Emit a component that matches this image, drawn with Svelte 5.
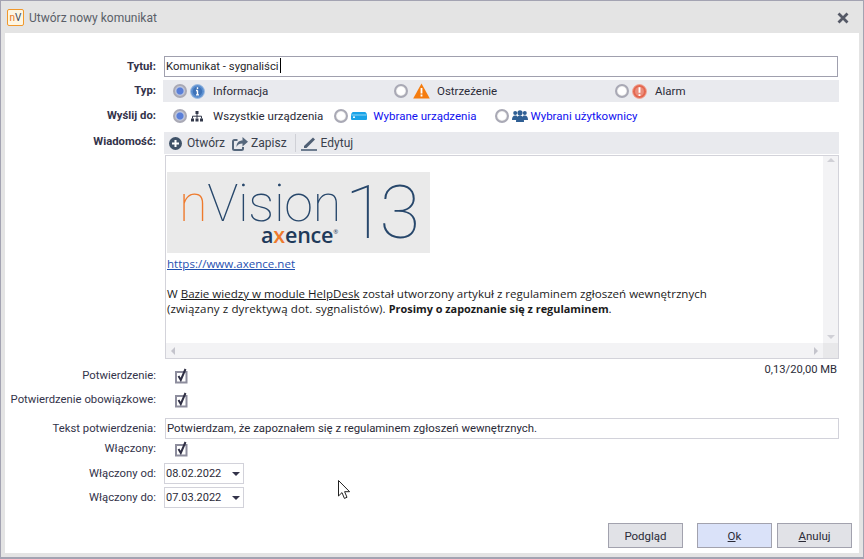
<script lang="ts">
  const types = [
    { label: 'Informacja', checked: true, icon: 'info', width: 221 },
    { label: 'Ostrzeżenie', checked: false, icon: 'warn', width: 221 },
    { label: 'Alarm', checked: false, icon: 'alarm', width: 0 }
  ];
</script>

{#snippet radio(checked: boolean)}
  <span class="radio" class:checked></span>
{/snippet}

{#snippet check()}
  <svg class="check" width="13" height="16" viewBox="0 0 13 16">
    <rect x="1" y="4" width="10.500" height="10.500" fill="#fff" stroke="#8d8d9d" stroke-width="2" />
    <path d="M3.500 8l2.300 4L10.500 1" fill="none" stroke="#2f2f44" stroke-width="2" />
  </svg>
{/snippet}

<div class="window">
  <header class="titlebar">
    <span class="appicon"><i>n</i><b>V</b></span>
    <span class="title">Utwórz nowy komunikat</span>
    <svg class="close" width="12" height="12" viewBox="0 0 12 12">
      <path d="M1.500 1.500l9 9M10.500 1.500l-9 9" stroke="#555966" stroke-width="2.800" />
    </svg>
  </header>

  <main class="body">
    <div class="row r-title">
      <label class="lbl strong" for="t">Tytuł:</label>
      <div class="input title-input" id="t">Komunikat - sygnaliści<span class="caret"></span></div>
    </div>

    <div class="row r-type">
      <span class="lbl strong">Typ:</span>
      <div class="typebar">
        {#each types as t}
          <div class="typeitem" style="width: {t.width ? t.width + 'px' : 'auto'}">
            {@render radio(t.checked)}
            {#if t.icon === 'info'}
              <svg class="ic" width="15" height="15" viewBox="0 0 16 16">
                <circle cx="8" cy="8" r="7.400" fill="#5b8fd0" stroke="#9dbbe0" />
                <circle cx="8" cy="8" r="5" fill="#3f73b8" />
                <path d="M8 3.500v1.800M8 7v4.600M6.400 7h1.800M6.400 11.600h3.200" stroke="#fff" stroke-width="1.500" />
              </svg>
            {:else if t.icon === 'warn'}
              <svg class="ic warn" width="17" height="16" viewBox="0 0 17 16">
                <path d="M8.500 0.500L16.800 15.500H0.200z" fill="#f57c0f" />
                <path d="M8.500 5v5.400M8.500 11.600v2" stroke="#fff" stroke-width="1.800" />
              </svg>
            {:else}
              <svg class="ic" width="15" height="15" viewBox="0 0 16 16">
                <circle cx="8" cy="8" r="7.400" fill="#e4674f" stroke="#f0a898" />
                <circle cx="8" cy="8" r="4.800" fill="#fff" opacity="0.250" />
                <path d="M8 3.400v6M8 10.800v2" stroke="#fff" stroke-width="2" />
              </svg>
            {/if}
            <span class="typelabel">{t.label}</span>
          </div>
        {/each}
      </div>
    </div>

    <div class="row r-send">
      <span class="lbl strong">Wyślij do:</span>
      <div class="sendbar">
        {@render radio(true)}
        <svg class="ic i-tree" width="12" height="11" viewBox="0 0 12 11">
          <path d="M4.500 0h3v3h-3zM0 7.500h3v3H0zM4.500 7.500h3v3h-3zM9 7.500h3v3H9z" fill="#33394a" />
          <path d="M6 3v4.500M1.500 7.500V5.200h9v2.300" fill="none" stroke="#33394a" />
        </svg>
        <span class="s-all">Wszystkie urządzenia</span>
        {@render radio(false)}
        <svg class="ic i-dev" width="16" height="8" viewBox="0 0 16 8">
          <path d="M2 0h12q1 0 1.500 1.500L16 3v4q0 1-1 1H1q-1 0-1-1V3l.5-1.500Q1 0 2 0z" fill="#19a3e8" />
          <path d="M0.500 3h15" stroke="#8fd6f6" />
          <rect x="2" y="4.500" width="2" height="1.400" fill="#fff" />
        </svg>
        <span class="blue s-dev">Wybrane urządzenia</span>
        {@render radio(false)}
        <svg class="ic i-users" width="16" height="12" viewBox="0 0 16 12">
          <g fill="#2f5f94">
            <circle cx="3.200" cy="3" r="2" /><circle cx="12.800" cy="3" r="2" />
            <path d="M0 10c0-3 1-4.600 3.200-4.600S5 6 5 7v3zM16 10c0-3-1-4.600-3.200-4.600S11 6 11 7v3z" />
            <circle cx="8" cy="2.800" r="2.600" /><path d="M4 12c0-4.500 1.400-6.500 4-6.500s4 2 4 6.500z" />
          </g>
        </svg>
        <span class="blue s-users">Wybrani użytkownicy</span>
      </div>
    </div>

    <div class="row r-toolbar">
      <span class="lbl strong">Wiadomość:</span>
      <div class="toolbar">
        <svg width="13" height="13" viewBox="0 0 13 13">
          <circle cx="6.500" cy="6.500" r="6.500" fill="#3f5268" />
          <path d="M6.500 3v7M3 6.500h7" stroke="#fff" stroke-width="2" />
        </svg>
        <span class="tool t-open">Otwórz</span>
        <svg width="16" height="15" viewBox="0 0 16 15">
          <path d="M5.500 4H2.500Q1 4 1 5.500v7Q1 14 2.500 14h7q1.500 0 1.500-1.500V11" fill="none" stroke="#55677c" stroke-width="2" />
          <path d="M4.500 11c0-4.500 2.500-6.500 6-6.500V1L16 5.800 10.500 10.500V7.500c-3 0-4.500.8-6 3.500z" fill="#55677c" />
        </svg>
        <span class="tool t-save">Zapisz</span>
        <span class="sep"></span>
        <svg width="16" height="15" viewBox="0 0 16 15">
          <path d="M3 10L12 1.500l2 2L5.500 12H3z" fill="#4f5f74" />
          <path d="M0 14h16" stroke="#4f6278" stroke-width="1.600" />
        </svg>
        <span class="tool">Edytuj</span>
      </div>
    </div>

    <div class="row r-editor">
      <div class="editor">
        <div class="content">
          <div class="logo">
            <span class="vision"><i>n</i>Vision</span>
            <span class="num">13</span>
            <span class="axence">a<i>x</i>ence<sup>®</sup></span>
          </div>
          <div class="link">https://www.axence.net</div>
          <p><span>W <u>Bazie wiedzy w module HelpDesk</u> został utworzony artykuł z regulaminem zgłoszeń wewnętrznych</span><br />
            <span class="second">(związany z dyrektywą dot. sygnalistów). <b>Prosimy o zapoznanie się z regulaminem</b>.</span></p>
        </div>
        <div class="vscroll">
          <span class="arrow up"></span><span class="arrow down"></span>
        </div>
        <div class="hscroll">
          <span class="arrow left"></span><span class="arrow right"></span>
        </div>
        <div class="corner"></div>
      </div>
    </div>

    <div class="row r-confirm">
      <span class="lbl">Potwierdzenie:</span>
      {@render check()}
      <span class="size">0,13/20,00 MB</span>
    </div>
    <div class="row r-must">
      <span class="lbl">Potwierdzenie obowiązkowe:</span>
      {@render check()}
    </div>
    <div class="row r-text">
      <span class="lbl">Tekst potwierdzenia:</span>
      <div class="input text-input">Potwierdzam, że zapoznałem się z regulaminem zgłoszeń wewnętrznych.</div>
    </div>
    <div class="row r-on">
      <span class="lbl">Włączony:</span>
      {@render check()}
    </div>
    <div class="row r-from">
      <span class="lbl">Włączony od:</span>
      <div class="date"><span>08.02.2022</span><i></i></div>
    </div>
    <div class="row r-to">
      <span class="lbl">Włączony do:</span>
      <div class="date"><span>07.03.2022</span><i></i></div>
    </div>

    <footer class="buttons">
      <button class="btn preview">Podgląd</button>
      <button class="btn ok"><u>O</u>k</button>
      <button class="btn"><u>A</u>nuluj</button>
    </footer>

    <svg class="cursor" width="13" height="20" viewBox="0 0 13 20">
      <path d="M0.500 0.500V16l3.500-3.400 2.400 5.800 2.600-1.100-2.400-5.600h5z" fill="#fff" stroke="#222" />
    </svg>
  </main>
</div>

<style>
  :global(body) {
    margin: 0;
    background: #e4e4e4;
  }
  .window {
    width: 864px;
    height: 559px;
    box-sizing: border-box;
    display: flex;
    flex-direction: column;
    background: #e4e4e4;
    border: 1px solid #a3a3b2;
    border-bottom-width: 2px;
    font: 11.500px/16px Roboto, sans-serif;
    color: #2b2b38;
  }
  .titlebar {
    height: 32px;
    flex: none;
    display: flex;
    align-items: center;
    padding: 0 8px 0 6px;
    gap: 5px;
  }
  .appicon {
    width: 15px;
    height: 15px;
    border: 1px solid #f0982c;
    border-radius: 2px;
    background: #fdf6e4;
    display: flex;
    justify-content: center;
    font: 10px/15px Roboto, sans-serif;
  }
  .appicon i {
    font-style: normal;
    color: #e8761a;
  }
  .appicon b {
    font-weight: 400;
    color: #3a4658;
  }
  .title {
    font-size: 12px;
    color: #5a5f68;
    flex: 1;
    padding-top: 1px;
  }
  .close {
    margin: 1px 6px 0 0;
  }
  .body {
    position: relative;
    flex: 1;
    margin: 0 4px 4px;
    background: #fff;
    padding-top: 23px;
  }
  .row {
    display: flex;
    align-items: center;
  }
  .lbl {
    width: 151px;
    flex: none;
    text-align: right;
    margin-right: 8px;
    color: #33334a;
    font-size: 11.300px;
  }
  .strong {
    font-weight: 700;
  }
  .input {
    box-sizing: border-box;
    height: 21px;
    border: 1px solid #d2d2da;
    padding: 0 3px;
    line-height: 19px;
  }
  .title-input {
    width: 674px;
    border-color: #a0a0ae;
    padding-left: 1px;
    color: #1f1f2b;
    font-size: 11.300px;
  }
  .caret {
    display: inline-block;
    width: 1px;
    height: 15px;
    margin-left: 1px;
    vertical-align: -3px;
    background: #000;
  }
  .r-type {
    margin-top: 3px;
  }
  .typebar {
    width: 676px;
    height: 22px;
    margin-left: -1px;
    background: #e9eaee;
    display: flex;
    align-items: center;
    padding-left: 10px;
    box-sizing: border-box;
  }
  .typeitem {
    display: flex;
    align-items: center;
    flex: none;
  }
  .typeitem .ic {
    margin-left: 3px;
  }
  .typeitem .warn {
    margin-left: 5px;
  }
  .typelabel {
    margin-left: 8px;
  }
  .typeitem:nth-child(2) .typelabel {
    margin-left: 7px;
  }
  .radio {
    box-sizing: border-box;
    width: 14px;
    height: 14px;
    flex: none;
    border-radius: 50%;
    border: 2px solid #a9a9b5;
    background: #fff;
    box-shadow: inset 0 0 1px #888;
  }
  .radio.checked {
    background: radial-gradient(circle, #5a7fd8 0 3px, #b7c4e6 4px, #dfe3ef 5px);
  }
  .r-send {
    margin-top: 3px;
    height: 22px;
  }
  .sendbar {
    display: flex;
    align-items: center;
    margin-left: -1px;
    padding-left: 10px;
  }
  .i-tree {
    margin-left: 4px;
  }
  .i-dev {
    margin-left: 3px;
  }
  .i-users {
    margin-left: 3px;
  }
  .s-all {
    margin-left: 10px;
    margin-right: 11px;
  }
  .s-dev {
    margin-left: 6px;
    margin-right: 18px;
  }
  .s-users {
    margin-left: 3px;
  }
  .blue {
    color: #1010f0;
  }
  .r-toolbar {
    margin-top: 5px;
    align-items: flex-start;
  }
  .r-toolbar .lbl {
    line-height: 20px;
  }
  .toolbar {
    box-sizing: border-box;
    width: 675px;
    height: 22px;
    background: #e9eaee;
    display: flex;
    align-items: center;
    padding-left: 5px;
  }
  .tool {
    font-size: 12px;
    color: #3a3f4c;
    margin-left: 4px;
  }
  .t-open {
    margin-left: 5px;
    margin-right: 7px;
  }
  .t-save {
    margin-left: 3px;
  }
  .sep {
    width: 1px;
    height: 18px;
    background: #cfd0d6;
    margin: 0 5px 0 8px;
  }
  .r-editor {
    margin-top: 1px;
    padding-left: 160px;
  }
  .editor {
    position: relative;
    box-sizing: border-box;
    width: 674px;
    height: 204px;
    border: 1px solid #d3d3da;
    background: #fff;
    overflow: hidden;
  }
  .content {
    padding: 16px 0 0 1px;
    font: 11.550px/15px "Open Sans", sans-serif;
    color: #1b1b1b;
  }
  .logo {
    position: relative;
    width: 263px;
    height: 81px;
    background: #eaeaea;
    color: #27476b;
  }
  .vision {
    position: absolute;
    left: 12px;
    top: 14px;
    font: 100 52px/36px Roboto, sans-serif;
    letter-spacing: -0.300px;
  }
  .vision i {
    font-style: normal;
    color: #ee7a2d;
  }
  .num {
    position: absolute;
    left: 178px;
    top: 8px;
    font: 100 74px/66px Roboto, sans-serif;
    letter-spacing: -6px;
  }
  .axence {
    position: absolute;
    left: 94px;
    top: 55px;
    font: 600 21.500px/16px "Open Sans", sans-serif;
    letter-spacing: -0.200px;
    color: #1f3a5a;
  }
  .axence i {
    font-style: normal;
    color: #ee7a2d;
  }
  .axence sup {
    font-size: 6px;
    font-weight: 400;
    vertical-align: 9px;
    line-height: 0;
  }
  .link {
    margin-top: 3px;
    color: #1f50b0;
    text-decoration: underline;
  }
  .content p {
    margin: 15px 0 0;
  }
  .second {
    letter-spacing: 0.100px;
  }
  .second b {
    font-size: 10.900px;
    letter-spacing: 0;
  }
  .vscroll {
    position: absolute;
    right: 0;
    top: 0;
    bottom: 15px;
    width: 15px;
    background: #f3f3f5;
  }
  .hscroll {
    position: absolute;
    left: 0;
    right: 15px;
    bottom: 0;
    height: 15px;
    background: #f3f3f5;
  }
  .corner {
    position: absolute;
    right: 0;
    bottom: 0;
    width: 15px;
    height: 15px;
    background: #e8e8ea;
  }
  .arrow {
    position: absolute;
    width: 0;
    height: 0;
    border: 4px solid transparent;
  }
  .arrow.up {
    top: 2px;
    left: 4px;
    border-top: 0;
    border-bottom-color: #d0d0d6;
  }
  .arrow.down {
    bottom: 4px;
    left: 4px;
    border-bottom: 0;
    border-top-color: #d0d0d6;
  }
  .arrow.left {
    left: 5px;
    top: 4px;
    border-left: 0;
    border-right-color: #c4c4cc;
  }
  .arrow.right {
    right: 5px;
    top: 4px;
    border-right: 0;
    border-left-color: #c4c4cc;
  }
  .check {
    margin-left: 11px;
    flex: none;
  }
  .r-confirm {
    position: relative;
    margin-top: 8px;
    height: 18px;
  }
  .size {
    position: absolute;
    right: 22px;
    top: -5px;
    font-size: 11.200px;
  }
  .r-must {
    margin-top: 6px;
    height: 18px;
  }
  .r-text {
    margin-top: 9px;
  }
  .text-input {
    width: 674px;
    margin-left: 1px;
    padding-left: 1px;
    font-size: 11.400px;
  }
  .r-on {
    margin-top: 1px;
    height: 18px;
    margin-bottom: 5px;
  }
  .date {
    box-sizing: border-box;
    width: 80px;
    height: 21px;
    border: 1px solid #d2d2da;
    display: flex;
    align-items: center;
    justify-content: space-between;
    padding: 0 3px 0 1px;
    font-size: 11px;
  }
  .date i {
    width: 0;
    height: 0;
    border: 4px solid transparent;
    border-bottom: 0;
    border-top-color: #33334a;
  }
  .r-to {
    margin-top: 3px;
  }
  .buttons {
    position: absolute;
    right: 7px;
    bottom: 5px;
    display: flex;
  }
  .btn {
    box-sizing: border-box;
    width: 75px;
    height: 25px;
    margin-left: 5px;
    padding: 0;
    border: 1px solid #a2a2ae;
    background: #e1e2e7;
    font: 11.500px Roboto, sans-serif;
    color: #2b2b38;
  }
  .preview {
    margin-right: 9px;
  }
  .ok {
    background: #dae2f9;
  }
  .cursor {
    position: absolute;
    left: 333px;
    top: 447px;
  }
</style>
